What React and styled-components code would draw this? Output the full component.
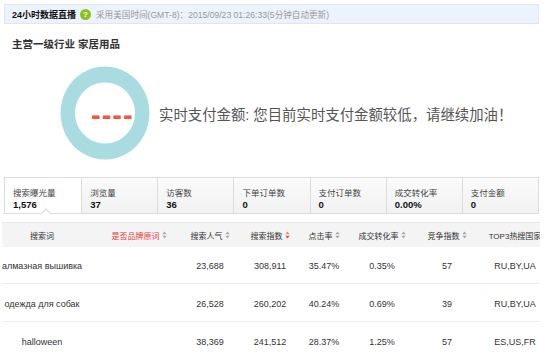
import React from 'react';
import styled, { createGlobalStyle, css } from 'styled-components';

const GlobalStyle = createGlobalStyle`
    * { box-sizing: border-box; }
    body {
        margin: 0;
        background: #fff;
        font-family: "Liberation Sans", "Noto Sans CJK SC", sans-serif;
        color: #333;
        overflow: hidden;
    }
`;

const Page = styled.div`
    width: 546px;
    height: 358px;
    padding: 4px 7px 0 4px;
    overflow: hidden;
`;

const TopBar = styled.div`
    height: 20px;
    display: flex;
    align-items: center;
    padding-left: 7px;
    background: #edf3fc;
    border: 1px solid #dde6f3;
    font-size: 8.6px;
`;

const LiveTitle = styled.span`
    font-weight: bold;
    font-size: 9px;
    color: #111;
`;

const Help = styled.span`
    width: 11px;
    height: 11px;
    margin: 0 5px 0 4px;
    border-radius: 50%;
    background: #8cc21e;
    color: #fff;
    font-size: 8px;
    font-weight: bold;
    display: flex;
    align-items: center;
    justify-content: center;
`;

const Muted = styled.span`
    color: #999;
`;

const Industry = styled.div`
    margin: 13px 0 0 8px;
    font-size: 10.5px;
    line-height: 14px;
    font-weight: bold;
    color: #333;
`;

const Hero = styled.div`
    display: flex;
    align-items: center;
    margin: 15px 0 0 56px;
`;

const Donut = styled.div`
    position: relative;
    width: 90px;
    height: 94px;
    flex-shrink: 0;
`;

const DashValue = styled.span`
    position: absolute;
    left: 31px;
    top: 34px;
    font-size: 29px;
    font-weight: bold;
    letter-spacing: 1px;
    line-height: 30px;
    color: #f05745;
`;

const Message = styled.div`
    margin-left: 9px;
    font-size: 14.4px;
    color: #555;
    white-space: nowrap;
`;

const Tabs = styled.div`
    display: grid;
    grid-template-columns: repeat(7, 1fr);
    width: 535px;
    height: 37px;
    margin-top: 17px;
    border: 1px solid #dcdcdc;
`;

const Tab = styled.div`
    position: relative;
    padding: 9px 0 0 8px;
    line-height: 12px;
    background: linear-gradient(#fbfbfb, #f1f1f1);
    & + & { border-left: 1px solid #dcdcdc; }
    ${(p) =>
        p.active &&
        css`
            background: #fff;
            &::after {
                content: '';
                position: absolute;
                left: 37px;
                bottom: -5px;
                width: 7px;
                height: 7px;
                background: #fff;
                border-left: 1px solid #dcdcdc;
                border-top: 1px solid #dcdcdc;
                transform: rotate(45deg);
            }
        `}
`;

const TabLabel = styled.div`
    font-size: 8.5px;
    color: #444;
`;

const TabValue = styled.div`
    font-size: 9.5px;
    font-weight: bold;
    color: #111;
`;

const cols = [80, 114, 28, 92, 16, 100, 30, 106];

const Table = styled.div`
    width: 538px;
    margin: 8px 0 0 -2px;
    overflow: hidden;
`;

const Row = styled.div`
    display: grid;
    grid-template-columns: ${cols.map((c) => c + 'px').join(' ')};
    width: max-content;
    min-width: 100%;
    ${(p) =>
        p.head
            ? css`
                  height: 25px;
                  background: #f4f4f4;
                  border-top: 1px solid #e8e8e8;
                  font-size: 8px;
                  color: #333;
              `
            : css`
                  height: ${p.h || 38}px;
                  padding-top: 2px;
                  border-bottom: 1px solid #ececec;
                  font-size: 9px;
                  color: #333;
              `}
`;

const Cell = styled.div`
    display: flex;
    align-items: center;
    justify-content: center;
    white-space: nowrap;
    color: ${(p) => (p.red ? '#ee3b3b' : 'inherit')};
`;

const Sort = styled.svg`
    flex-shrink: 0;
    margin-left: 2px;
`;

const SortIcon = ({ on }) => (
    <Sort width="5" height="8" viewBox="0 0 5 8">
        <path d="M2.5 0.5 L4.7 3.2 H0.3 Z" fill={on ? '#f08a5d' : '#aaa'} />
        <path d="M2.5 7.5 L4.7 4.8 H0.3 Z" fill={on ? '#ee4a3a' : '#aaa'} />
    </Sort>
);

const tabs = [
    ['搜索曝光量', '1,576'],
    ['浏览量', '37'],
    ['访客数', '36'],
    ['下单订单数', '0'],
    ['支付订单数', '0'],
    ['成交转化率', '0.00%'],
    ['支付金额', '0'],
];

const rows = [
    ['алмазная вышивка', '23,688', '308,911', '35.47%', '0.35%', '57', 'RU,BY,UA'],
    ['одежда для собак', '26,528', '260,202', '40.24%', '0.69%', '39', 'RU,BY,UA'],
    ['halloween', '38,369', '241,512', '28.37%', '1.25%', '57', 'ES,US,FR'],
];

function App() {
    return (
        <Page>
            <GlobalStyle />
            <TopBar>
                <LiveTitle>24小时数据直播</LiveTitle>
                <Help>?</Help>
                <Muted>采用美国时间(GMT-8)：2015/09/23 01:26:33(5分钟自动更新)</Muted>
            </TopBar>
            <Industry>主营一级行业 家居用品</Industry>
            <Hero>
                <Donut>
                    <svg width="90" height="94" viewBox="0 0 90 94">
                        <path
                            fillRule="evenodd"
                            fill="#a9dce0"
                            d="M45 0.5 A44.5 46.5 0 1 1 44.99 0.5 Z M45 16.5 A30 30.5 0 1 0 45.01 16.5 Z"
                        />
                    </svg>
                    <DashValue>----</DashValue>
                </Donut>
                <Message>实时支付金额: 您目前实时支付金额较低，请继续加油！</Message>
            </Hero>
            <Tabs>
                {tabs.map(([label, value], i) => (
                    <Tab key={label} active={i === 0}>
                        <TabLabel>{label}</TabLabel>
                        <TabValue>{value}</TabValue>
                    </Tab>
                ))}
            </Tabs>
            <Table>
                <Row head>
                    <Cell>搜索词</Cell>
                    <Cell red>是否品牌原词<SortIcon /></Cell>
                    <Cell>搜索人气<SortIcon /></Cell>
                    <Cell>搜索指数<SortIcon on /></Cell>
                    <Cell>点击率<SortIcon /></Cell>
                    <Cell>成交转化率<SortIcon /></Cell>
                    <Cell>竞争指数<SortIcon /></Cell>
                    <Cell>TOP3热搜国家</Cell>
                </Row>
                {rows.map((r, i) => (
                    <Row key={r[0]} h={i === 0 ? 37 : 38}>
                        <Cell>{r[0]}</Cell>
                        <Cell />
                        {r.slice(1).map((v, j) => (
                            <Cell key={j}>{v}</Cell>
                        ))}
                    </Row>
                ))}
            </Table>
        </Page>
    );
}

export default App;
